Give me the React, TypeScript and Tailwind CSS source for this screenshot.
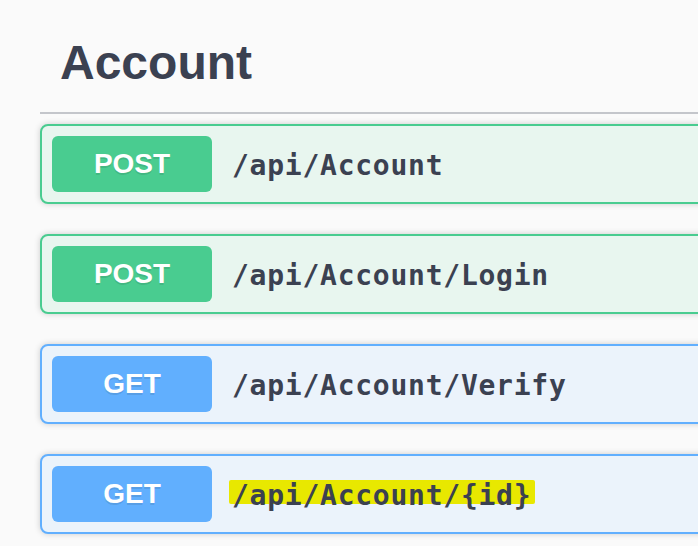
const ops = [
  { method: "POST", path: "/api/Account" },
  { method: "POST", path: "/api/Account/Login" },
  { method: "GET", path: "/api/Account/Verify" },
  { method: "GET", path: "/api/Account/{id}", marked: true },
];

const OpBlock = ({ method, path, marked }: any) => {
  const isPost = method === "POST";
  return (
    <div
      className={`flex items-center h-[80px] mb-[30px] px-[10px] border-2 rounded-[8px] shadow-[0_0_6px_rgba(0,0,0,0.19)] ${
        isPost
          ? "border-[#49cc90] bg-[#e8f6ef]"
          : "border-[#61affe] bg-[#ebf3fb]"
      }`}
    >
      <span
        className={`w-[160px] h-[56px] flex items-center justify-center rounded-[6px] text-white font-bold text-[28px] font-['Liberation_Sans',Arial,sans-serif] [text-shadow:0_2px_0_rgba(0,0,0,0.1)] ${
          isPost ? "bg-[#49cc90]" : "bg-[#61affe]"
        }`}
      >
        {method}
      </span>
      <span className="ml-[20px] relative top-[2px] text-[28px] leading-[40px] tracking-[0.75px] font-bold text-[#3b4151] font-['DejaVu_Sans_Mono',monospace]">
        {marked && (
          <span className="absolute left-[-3px] right-[-4px] top-[4px] h-[24px] bg-[#e8e800] rounded-[2px]" />
        )}
        <span className="relative">{path}</span>
      </span>
    </div>
  );
};

const App = () => {
  return (
    <div className="w-full h-[546px] overflow-hidden bg-[#fafafa]">
      <div className="w-[800px] pl-[40px] pt-[17px]">
        <h3 className="pl-[20px] pt-[18px] pb-[22px] mb-[10px] border-b-2 border-[#c4c6cb] text-[48px] leading-[55px] font-bold text-[#3b4151] font-['Liberation_Sans',Arial,sans-serif]">
          Account
        </h3>
        {ops.map((op) => (
          <OpBlock key={op.path} {...op} />
        ))}
      </div>
    </div>
  );
};

export default App;
